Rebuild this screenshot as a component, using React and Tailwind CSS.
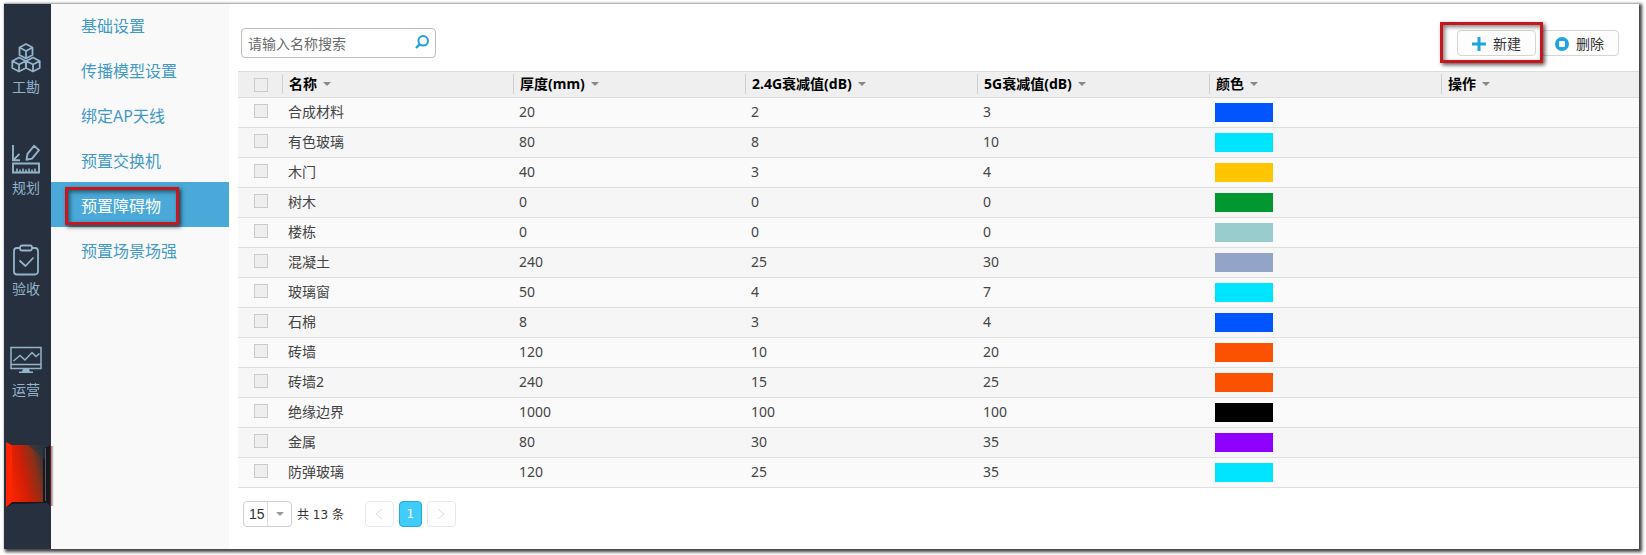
import React from 'react';

const rows = [
  ['合成材料', 20, 2, 3, '#0055ff'],
  ['有色玻璃', 80, 8, 10, '#00e5ff'],
  ['木门', 40, 3, 4, '#ffc500'],
  ['树木', 0, 0, 0, '#00982f'],
  ['楼栋', 0, 0, 0, '#99cccc'],
  ['混凝土', 240, 25, 30, '#93a4c9'],
  ['玻璃窗', 50, 4, 7, '#00e5ff'],
  ['石棉', 8, 3, 4, '#0055ff'],
  ['砖墙', 120, 10, 20, '#fa5200'],
  ['砖墙2', 240, 15, 25, '#fa5200'],
  ['绝缘边界', 1000, 100, 100, '#000000'],
  ['金属', 80, 30, 35, '#8f00ff'],
  ['防弹玻璃', 120, 25, 35, '#00e5ff'],
];

const headers = ['名称', '厚度(mm)', '2.4G衰减值(dB)', '5G衰减值(dB)', '颜色', '操作'];
const menu = ['基础设置', '传播模型设置', '绑定AP天线', '预置交换机', '预置障碍物', '预置场景场强'];

function CubesIcon() {
  return (
    <svg className="h-8 w-8" viewBox="0 0 32 32" fill="none" stroke="currentColor" strokeWidth="1.800" strokeLinejoin="round" aria-hidden="true">
      <path d="M16 2l6.500 3.500v7.500L16 16.500 9.500 13V5.500zM9.500 5.500L16 9l6.500-3.500M16 9v7.500" />
      <path d="M9 15.500l6.800 3.500v7L9 29.500 2.300 26v-7zM2.300 19L9 22.500l6.800-3.500M9 22.500v7" />
      <path d="M23 15.500l6.700 3.500v7L23 29.500 16.200 26v-7zM16.200 19l6.800 3.500 6.700-3.500M23 22.500v7" />
    </svg>
  );
}

function PlanIcon() {
  return (
    <svg className="h-8 w-8" viewBox="0 0 32 32" fill="none" stroke="currentColor" strokeWidth="1.900" aria-hidden="true">
      <path d="M3 2v15.200h7M3.500 16.800l6-6" />
      <path d="M16.500 16.800l1-6 6.500-8 5 4.300-7 8.500z" strokeLinejoin="round" />
      <path d="M3 20.500h26v9H3z" />
      <path d="M7 29v-3.500M10 29v-2.500M13 29v-3.500M16 29v-2.500M19 29v-3.500M22 29v-2.500M25 29v-3.500" strokeWidth="1.600" />
    </svg>
  );
}

function ClipboardIcon() {
  return (
    <svg className="h-8 w-8" viewBox="0 0 32 32" fill="none" stroke="currentColor" strokeWidth="1.800" strokeLinejoin="round" aria-hidden="true">
      <path d="M10 4H7a3 3 0 0 0-3 3v20.500a3 3 0 0 0 3 3h18a3 3 0 0 0 3-3V7a3 3 0 0 0-3-3h-3" />
      <rect x="10" y="1.500" width="12" height="5" rx="2" />
      <path d="M9.500 16.500l6 5.500 8-8.500" />
    </svg>
  );
}

function MonitorIcon() {
  return (
    <svg className="h-8 w-8" viewBox="0 0 32 32" fill="none" stroke="currentColor" strokeWidth="1.500" aria-hidden="true">
      <path d="M1 2.500h30v21H1zM1 19.500h30" />
      <path d="M3.500 16l6.500-5.500 5 4.500 7-7.500 4 4 3.500-3" />
      <path d="M13 24h6l1 2.500h3V28H9v-1.500h3z" fill="currentColor" stroke="none" />
    </svg>
  );
}

const modules = [
  ['工勘', CubesIcon],
  ['规划', PlanIcon],
  ['验收', ClipboardIcon],
  ['运营', MonitorIcon],
];

function Caret({ className = '' }) {
  return (
    <svg className={'h-1 w-2 ' + className} viewBox="0 0 8 4" fill="currentColor" aria-hidden="true">
      <path d="M0 0h8L4 4z" />
    </svg>
  );
}

function Highlight({ className }) {
  return (
    <span
      aria-hidden="true"
      className={'pointer-events-none absolute z-10 border-[3px] border-[#c8161d] shadow-[2px_2px_4px_rgba(0,0,0,0.65),inset_2px_2px_4px_rgba(0,0,0,0.5)] ' + className}
    />
  );
}

const box = 'block size-3.5 appearance-none border border-[#cbcbcb] bg-[#eeeeee] checked:bg-[#4aa9d8]';
const cell = 'p-0 pb-px pl-1.5';

export default function App() {
  return (
    <div className="flex min-h-screen bg-white pt-[3px] pr-[7px] pb-1.5 pl-1 font-['Noto_Sans','Noto_Sans_CJK_SC',sans-serif] text-sm text-[#444]">
      <div className="flex min-w-0 flex-1 border-t border-t-[#b4b4b4] bg-white shadow-[2px_2px_3px_1px_rgba(0,0,0,0.75)]">
        <nav className="flex w-[47px] shrink-0 flex-col items-center bg-[#26303f] pt-[38px] text-[#93b4cb]">
          {modules.map(([label, Icon]) => (
            <a key={label} href="#" className="flex h-[101px] w-full flex-col items-center gap-[3px] pr-[3px] leading-5">
              <Icon />
              {label}
            </a>
          ))}
          <svg className="relative -mt-1 h-[65px] w-[50px] self-start" viewBox="0 0 50 65" aria-hidden="true">
            <defs>
              <linearGradient id="ember" x1="0" y1="0.600" x2="1" y2="0.200">
                <stop offset="0" stopColor="#ff2500" />
                <stop offset="0.450" stopColor="#d01e06" />
                <stop offset="0.750" stopColor="#8a3018" />
                <stop offset="1" stopColor="#33343a" />
              </linearGradient>
              <linearGradient id="edge" x1="0" x2="1">
                <stop offset="0" stopColor="#777" stopOpacity="0.900" />
                <stop offset="1" stopColor="#777" stopOpacity="0" />
              </linearGradient>
            </defs>
            <path d="M47 4h3v60h-3z" fill="url(#edge)" />
            <path d="M2 0l6 3 36 2 3-3v62l-4-3-35 1-6 3z" fill="#17171f" />
            <path d="M2 0l6 3h31v57H8l-6 5z" fill="url(#ember)" />
            <path d="M24 3h18v16c-4-6-10-9-18-16z" fill="#263842" opacity="0.700" />
            <path d="M2 0l6 4v56l-6 5z" fill="#ff2500" />
            <path d="M41.500 6v53" stroke="#55595f" />
            <path d="M46.500 1v63" stroke="#7a1518" />
          </svg>
        </nav>

        <aside className="w-[178px] shrink-0 bg-[#f9f9fa]">
          <ul>
            {menu.map((label) => {
              const active = label === '预置障碍物';
              return (
                <li key={label} className="first:-mt-0.5">
                  <a
                    href="#"
                    aria-current={active ? 'page' : undefined}
                    className={'relative flex h-[45px] items-center pt-0.5 pl-[30px] text-base ' + (active ? 'bg-[#4aa9d8] text-white' : 'text-[#4299c6]')}
                  >
                    {label}
                    {active && <Highlight className="top-[5px] left-3.5 h-[38px] w-[114px]" />}
                  </a>
                </li>
              );
            })}
          </ul>
        </aside>

        <main className="min-w-0 flex-1 pl-[9px]">
          <div className="flex h-[67px] items-start justify-between pt-6 pr-5 pl-[3px]">
            <label className="flex h-[30px] w-[195px] items-center rounded border border-[#bdbdbd] px-1.5">
              <input
                type="text"
                aria-label="请输入名称搜索"
                placeholder="请输入名称搜索"
                className="min-w-0 flex-1 bg-transparent pt-0.5 leading-5 outline-none placeholder:text-[#6a6a6a]"
              />
              <svg className="mb-0.5 size-3.5" viewBox="0 0 14 14" fill="none" stroke="#1f9fdc" strokeWidth="2" aria-hidden="true">
                <circle cx="8.200" cy="5.800" r="4.800" />
                <path d="M4.700 9.300L1 13" strokeWidth="2.400" />
              </svg>
            </label>
            <div className="flex gap-1 pt-0.5">
              <div className="relative">
                <button type="button" className="flex h-[26px] w-[79px] items-center justify-center gap-[7px] rounded border border-[#d5d5d5] bg-[#fdfdfd] pt-px text-[#333]">
                  <svg className="size-3.5" viewBox="0 0 14 14" stroke="#1fa4e0" strokeWidth="3" aria-hidden="true">
                    <path d="M7 0v14M0 7h14" />
                  </svg>
                  新建
                </button>
                <Highlight className="-top-2 -left-[17px] h-[41px] w-[103px]" />
              </div>
              <button type="button" className="flex h-[26px] w-[79px] items-center justify-center gap-[7px] rounded border border-[#d5d5d5] bg-[#fdfdfd] pt-px text-[#333]">
                <svg className="size-3.5" viewBox="0 0 14 14" aria-hidden="true">
                  <circle cx="7" cy="7" r="7" fill="#1fa4e0" />
                  <rect x="4" y="4" width="6" height="6" rx="1" fill="#fff" />
                </svg>
                删除
              </button>
            </div>
          </div>

          <table className="w-full table-fixed border-collapse text-left leading-5">
            <colgroup>
              <col className="w-11" />
              <col className="w-[231px]" />
              <col className="w-[232px]" />
              <col className="w-[232px]" />
              <col className="w-[232px]" />
              <col className="w-[232px]" />
              <col />
            </colgroup>
            <thead>
              <tr className="h-[26px] border-y border-[#dcdcdc] bg-[#efefef] text-black">
                <th className="p-0 pl-4">
                  <input type="checkbox" aria-label="全选" className={box} />
                </th>
                {headers.map((h) => (
                  <th key={h} className="p-0 pb-0.5 font-bold">
                    <div className="flex h-5 items-center gap-1.5 border-l border-[#cfcfcf] pl-1.5">
                      {h}
                      <Caret className="text-[#888]" />
                    </div>
                  </th>
                ))}
              </tr>
            </thead>
            <tbody>
              {rows.map(([name, thick, a, b, color]) => (
                <tr key={name} className="h-[30px] border-b border-[#dfdfdf] bg-[#fafafa] even:bg-[#f6f6f6]">
                  <td className="p-0 pb-[3px] pl-4">
                    <input type="checkbox" aria-label={name} className={box} />
                  </td>
                  <td className={cell}>{name}</td>
                  <td className={cell}>{thick}</td>
                  <td className={cell}>{a}</td>
                  <td className={cell}>{b}</td>
                  <td className={cell}>
                    <div className="h-[19px] w-[58px]" style={{ backgroundColor: color }} />
                  </td>
                  <td className="p-0" />
                </tr>
              ))}
            </tbody>
          </table>

          <div className="mt-[13px] flex h-[26px] items-center pl-[5px] text-xs">
            <div className="relative h-[26px] w-[49px]">
              <select aria-label="每页条数" className="h-full w-full appearance-none rounded border border-[#cfcfcf] bg-white pl-[5px] font-['Liberation_Sans',sans-serif] text-sm text-[#333]">
                <option>15</option>
              </select>
              <span className="pointer-events-none absolute inset-y-px right-0 flex w-[25px] items-center justify-center border-l border-[#dcdcdc]">
                <Caret className="text-[#999]" />
              </span>
            </div>
            <span className="ml-[5px] pt-0.5 font-['DejaVu_Sans','Noto_Sans_CJK_SC',sans-serif] text-[#333]">共 13 条</span>
            <div className="ml-[21px] flex h-[26px] gap-[5px]">
              <button type="button" aria-label="上一页" className="flex w-[29px] items-center justify-center rounded border border-[#e8e8e8] text-[#dcdcdc]">
                <svg className="h-3 w-2" viewBox="0 0 8 12" fill="none" stroke="currentColor" aria-hidden="true">
                  <path d="M7 1L1 6l6 5" />
                </svg>
              </button>
              <button type="button" className="w-[23px] rounded border border-[#2aa8dc] bg-[#41cdfa] font-['DejaVu_Sans',sans-serif] text-white">
                1
              </button>
              <button type="button" aria-label="下一页" className="flex w-[29px] items-center justify-center rounded border border-[#e8e8e8] text-[#dcdcdc]">
                <svg className="h-3 w-2" viewBox="0 0 8 12" fill="none" stroke="currentColor" aria-hidden="true">
                  <path d="M1 1l6 5-6 5" />
                </svg>
              </button>
            </div>
          </div>
        </main>
      </div>
    </div>
  );
}
